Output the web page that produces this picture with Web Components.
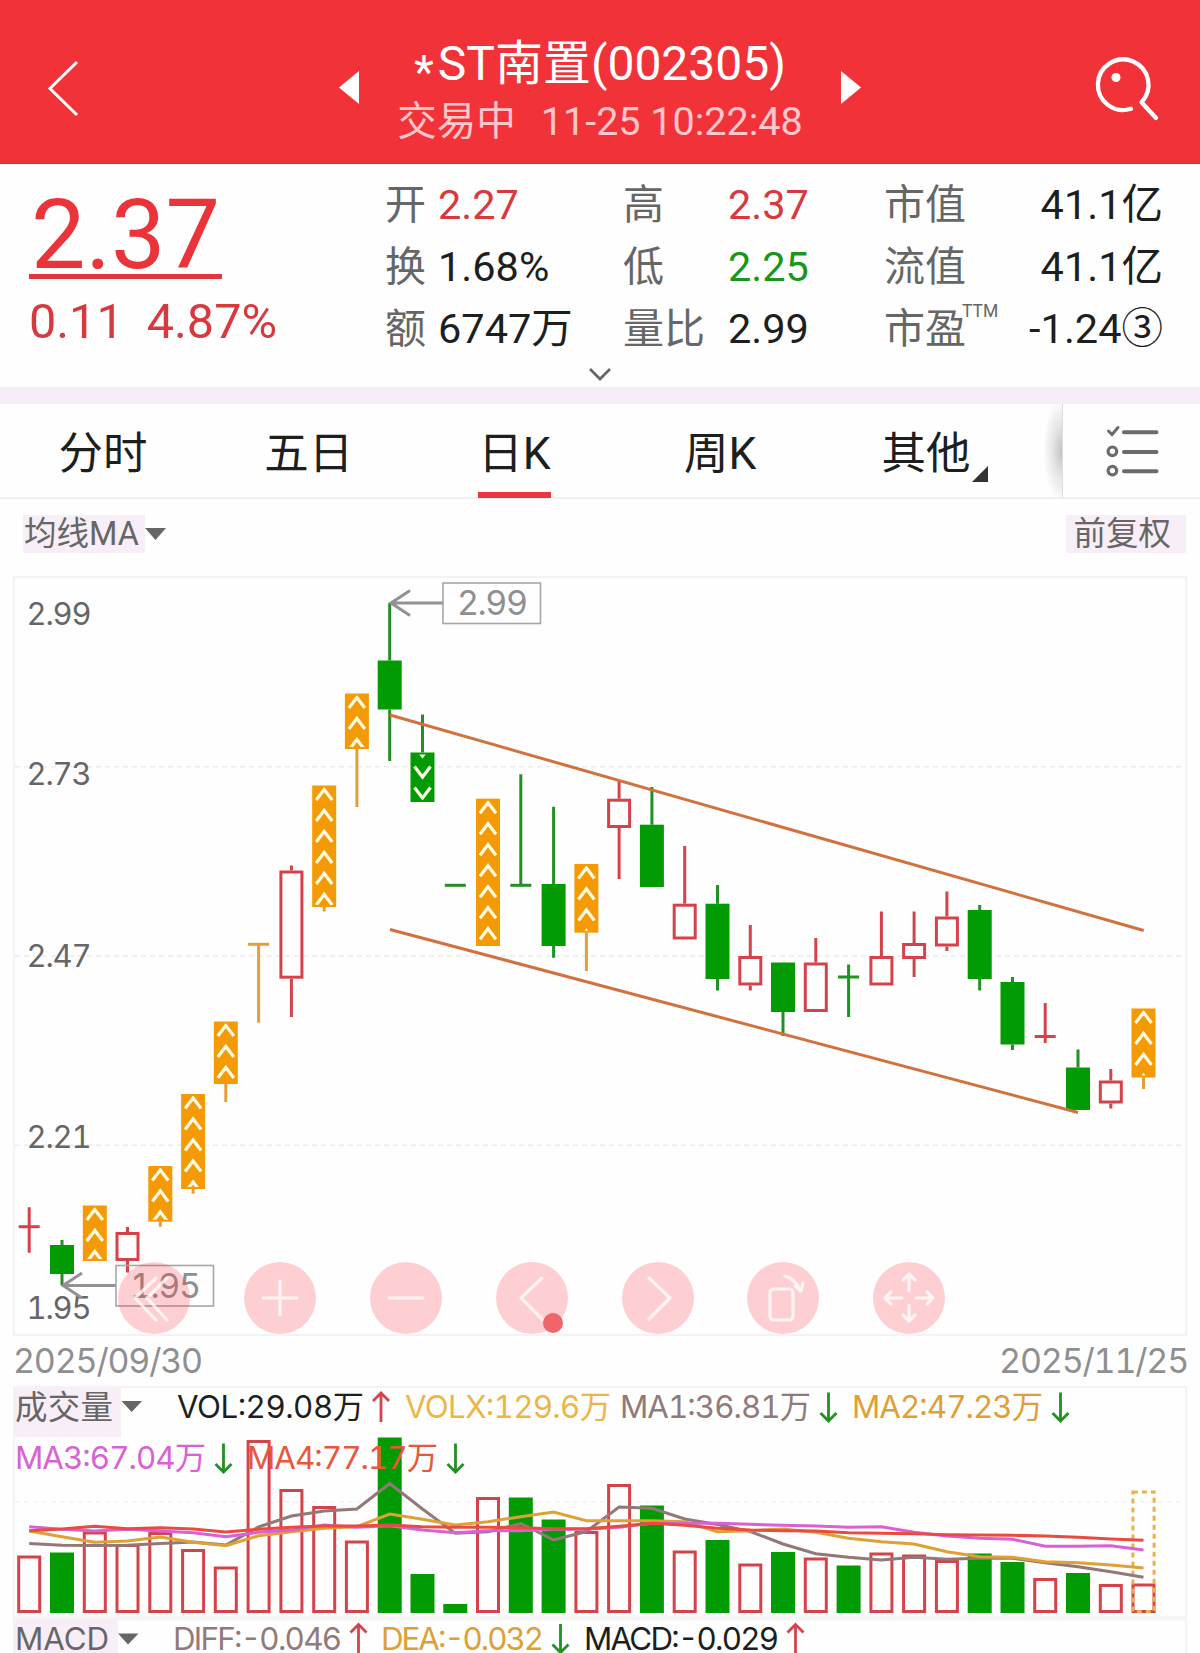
<!DOCTYPE html>
<html lang="zh-CN">
<head>
<meta charset="utf-8">
<meta name="viewport" content="width=device-width">
<title>*ST南置(002305)</title>
<style>
  body {
    margin: 0;
    width: 1200px;
    height: 1653px;
    overflow: hidden;
    background: #fefefe;
    font-family: Roboto, "Noto Sans CJK SC", sans-serif;
    color: #1c1f1e;
    --red: #d8393f;
    --green: #1a961a;
    --label: #666;
    --tint: #f7eef7;
    --chart-font: Inter, "Noto Sans CJK SC", sans-serif;
  }
</style>
</head>
<body>
<stock-page>
  <stock-header slot="header" mark="*" name="ST南置(002305)" status="交易中" time="11-25 10:22:48"></stock-header>
  <stock-quote slot="quote" price="2.37" change="0.11" percent="4.87%">
    <quote-cell label="开" tone="up">2.27</quote-cell>
    <quote-cell label="高" tone="up">2.37</quote-cell>
    <quote-cell label="市值">41.1亿</quote-cell>
    <quote-cell label="换">1.68%</quote-cell>
    <quote-cell label="低" tone="down">2.25</quote-cell>
    <quote-cell label="流值">41.1亿</quote-cell>
    <quote-cell label="额">6747万</quote-cell>
    <quote-cell label="量比">2.99</quote-cell>
    <quote-cell label="市盈" sup="TTM">-1.24③</quote-cell>
  </stock-quote>
  <period-tabs slot="tabs">
    <period-tab>分时</period-tab>
    <period-tab>五日</period-tab>
    <period-tab active>日K</period-tab>
    <period-tab>周K</period-tab>
    <period-tab more>其他</period-tab>
  </period-tabs>
  <chart-options slot="options">
    <span slot="left">均线MA</span>
    <span slot="right">前复权</span>
  </chart-options>
  <kline-chart slot="kline" from="2025/09/30" to="2025/11/25">
    <chart-tools></chart-tools>
  </kline-chart>
  <volume-chart slot="volume"></volume-chart>
</stock-page>

<script>
const RED = '#d5434a'
const GREEN = '#039b03'
const WICK_GREEN = '#229022'
const ORANGE = '#f39a05'

const centerOf = i => +(29.2 + 32.775 * i).toFixed(1)

class StockPage extends HTMLElement {
  constructor() {
    super()
    this.attachShadow({ mode: 'open' })
  }
  connectedCallback() {
    this.shadowRoot.innerHTML = `
      <style>
        :host { display: flex; flex-direction: column; width: 1200px; }
        .band { height: 17px; background: #f7edf7; }
      </style>
      <slot name="header"></slot>
      <slot name="quote"></slot>
      <div class="band"></div>
      <slot name="tabs"></slot>
      <slot name="options"></slot>
      <slot name="kline"></slot>
      <slot name="volume"></slot>
    `
  }
}

class StockHeader extends HTMLElement {
  constructor() {
    super()
    this.attachShadow({ mode: 'open' })
  }
  connectedCallback() {
    this.shadowRoot.innerHTML = `
      <style>
        :host {
          display: flex;
          justify-content: space-between;
          box-sizing: border-box;
          height: 164px;
          background: #f13339;
          border-bottom: 1px solid #c9353a;
          color: #fff;
        }
        svg { display: block; fill: none; stroke: #fff; }
        .title { display: flex; gap: 34px; }
        .text { width: 414px; text-align: center; white-space: nowrap; }
        .name {
          display: flex;
          justify-content: center;
          gap: 4px;
          height: 54px;
          font-size: 48px;
          line-height: 54px;
          margin-top: 37px;
        }
        .mark { padding-top: 8px; font-size: 46px; }
        .sub {
          display: flex;
          justify-content: center;
          gap: 25px;
          font-size: 39.500px;
          line-height: 46px;
          margin-top: 8px;
          color: #ffc6cb;
        }
      </style>
      <svg width="140" height="163"><path d="M77 62L50 88.500L77 115" stroke-width="3"/></svg>
      <div class="title">
        <svg width="20" height="163"><path d="M20 71V104L0 87.500Z" fill="#fff" stroke="none"/></svg>
        <div class="text">
          <div class="name"><span class="mark">${this.getAttribute('mark')}</span><span>${this.getAttribute('name')}</span></div>
          <div class="sub"><span>${this.getAttribute('status')}</span><span>${this.getAttribute('time')}</span></div>
        </div>
        <svg width="20" height="163"><path d="M0 71V104L20 87.500Z" fill="#fff" stroke="none"/></svg>
      </div>
      <svg width="140" height="163" viewBox="1060 0 140 163" stroke-width="4.300" stroke-linecap="round" stroke-linejoin="round">
        <path d="M1131 108.800A25.300 25.300 0 1 1 1141.500 102.200L1156 118"/>
        <circle cx="1116" cy="77.500" r="4.500" fill="#fff" stroke="none"/>
      </svg>
    `
  }
}

class StockQuote extends HTMLElement {
  constructor() {
    super()
    this.attachShadow({ mode: 'open' })
  }
  connectedCallback() {
    this.shadowRoot.innerHTML = `
      <style>
        :host {
          display: grid;
          grid-template-columns: 357px 1fr;
          grid-template-rows: 194px 29px;
          height: 223px;
          color: #ea343a;
        }
        .main { padding-left: 29px; }
        .price {
          width: 193px;
          box-sizing: border-box;
          height: 115px;
          border-bottom: 5px solid #e0383e;
          font-size: 97px;
          line-height: 142px;
          text-align: center;
        }
        .change {
          display: flex;
          gap: 23px;
          font-size: 48.600px;
          line-height: 56px;
          margin-top: 15px;
          color: var(--red);
        }
        .cells {
          display: grid;
          grid-template-columns: 238px 261px 279px;
          grid-auto-rows: 61.800px;
          padding: 11px 0 0 28px;
        }
        .more { grid-column: 1 / 3; justify-self: center; }
      </style>
      <div class="main">
        <div class="price">${this.getAttribute('price')}</div>
        <div class="change"><span>${this.getAttribute('change')}</span><span>${this.getAttribute('percent')}</span></div>
      </div>
      <div class="cells"><slot></slot></div>
      <svg class="more" width="24" height="29" fill="none" stroke="#666" stroke-width="2.800"><path d="M2 11L12 21L22 11"/></svg>
    `
    // columns differ in how the value sits beside its label
    Array.from(this.children).forEach((cell, i) => {
      cell.setAttribute('column', i % 3)
    })
  }
}

class QuoteCell extends HTMLElement {
  constructor() {
    super()
    this.attachShadow({ mode: 'open' })
  }
  connectedCallback() {
    this.shadowRoot.innerHTML = `
      <style>
        :host {
          display: flex;
          font-size: 41.500px;
          line-height: 61px;
          color: #1c1f1e;
          white-space: nowrap;
        }
        :host([tone="up"]) { color: var(--red); }
        :host([tone="down"]) { color: var(--green); }
        .label { font-size: 41px; color: var(--label); margin-right: 12px; position: relative; }
        .value { line-height: 59px; }
        :host([column="1"]) .label { width: 93px; }
        :host([column="2"]) { justify-content: space-between; }
        sup {
          position: absolute;
          left: 78px;
          top: 2px;
          font-size: 17.500px;
          line-height: 20px;
        }
      </style>
      <span class="label">${this.getAttribute('label')}${this.hasAttribute('sup') ? `<sup>${this.getAttribute('sup')}</sup>` : ''}</span>
      <span class="value"><slot></slot></span>
    `
  }
}

class PeriodTabs extends HTMLElement {
  constructor() {
    super()
    this.attachShadow({ mode: 'open' })
  }
  connectedCallback() {
    this.shadowRoot.innerHTML = `
      <style>
        :host {
          display: flex;
          box-sizing: border-box;
          height: 95px;
          border-bottom: 2px solid #f1f0f1;
        }
        .tabs { display: grid; grid-template-columns: repeat(5, 205.800px); width: 1029px; }
        .shade {
          width: 34px;
          box-sizing: border-box;
          border-right: 1px solid #dcdcdc;
          background: radial-gradient(ellipse 19px 52px at 100% 50%, #c4c2c4, #e6e4e6 50%, #fefefe);
        }
        svg { display: block; }
      </style>
      <div class="tabs"><slot></slot></div>
      <div class="shade"></div>
      <svg width="136" height="93" viewBox="1064 404 136 93" fill="none" stroke="#6b6b6b" stroke-linecap="round">
        <path d="M1125 432.300H1157.500M1125 452H1157.500M1125 471.300H1157.500" stroke-width="4"/>
        <path d="M1109.500 431L1113 434.500L1119 427.500" stroke-width="3"/>
        <circle cx="1113.400" cy="451.300" r="4.300" stroke-width="3.200"/>
        <circle cx="1113.400" cy="470.600" r="4.300" stroke-width="3.200"/>
      </svg>
    `
  }
}

class PeriodTab extends HTMLElement {
  constructor() {
    super()
    this.attachShadow({ mode: 'open' })
  }
  connectedCallback() {
    this.shadowRoot.innerHTML = `
      <style>
        :host {
          display: flex;
          justify-content: center;
          font-size: 44.500px;
          line-height: 101px;
        }
        span { position: relative; height: 94px; }
        :host([active]) span { box-shadow: inset 0 -6px #e9383d; }
        :host([more]) span::after {
          content: "";
          position: absolute;
          right: -17px;
          top: 62px;
          border: 8px solid;
          border-color: transparent #333 #333 transparent;
        }
      </style>
      <span><slot></slot></span>
    `
  }
}

class ChartOptions extends HTMLElement {
  constructor() {
    super()
    this.attachShadow({ mode: 'open' })
  }
  connectedCallback() {
    this.shadowRoot.innerHTML = `
      <style>
        :host {
          display: flex;
          justify-content: space-between;
          box-sizing: border-box;
          height: 71px;
          padding: 16px 14px 0 23px;
          font-size: 32.500px;
          line-height: 39px;
          color: var(--label);
        }
        div { display: flex; }
        .badge { height: 38px; padding: 0 6px 0 1px; background: var(--tint); }
        .right { padding: 0 15px 0 7px; }
      </style>
      <div>
        <div class="badge"><slot name="left"></slot></div>
        <svg width="21" height="38" fill="#666"><path d="M0 13H21L10.500 25Z"/></svg>
      </div>
      <div class="badge right"><slot name="right"></slot></div>
    `
  }
}

// kind, high, body top, body bottom, low (a bar without a body has top equal to bottom)
const CANDLES = [
  ['red', 1207.3, 1226.7, 1226.7, 1252.7],
  ['green', 1240, 1245, 1274, 1285],
  ['limit', 1205.5, 1205.5, 1261, 1261],
  ['red', 1227, 1232, 1261, 1272.5],
  ['limit', 1166, 1166, 1221.7, 1226.7],
  ['limit', 1094, 1094, 1189, 1193.7],
  ['limit', 1021.5, 1021.5, 1084, 1102],
  ['limit', 944.3, 944.3, 944.3, 1022.7],
  ['red', 865.5, 870.5, 978.7, 1017],
  ['limit', 785.5, 785.5, 907, 911.5],
  ['limit', 693.5, 693.5, 749, 807],
  ['green', 603, 660.5, 709.5, 761],
  ['drop', 714.5, 752.5, 802, 802],
  ['green', 885.3, 885.3, 885.3, 885.3],
  ['limit', 798.7, 798.7, 946, 946],
  ['green', 774.3, 885.3, 885.3, 885.3],
  ['green', 806.7, 884, 946, 957.7],
  ['limit', 864, 864, 932.7, 971],
  ['red', 780, 798.7, 828, 879],
  ['green', 787, 824.7, 887, 887],
  ['red', 846, 903.7, 939.5, 939.5],
  ['green', 885, 903.7, 979, 990.5],
  ['red', 925, 956, 985.5, 990.5],
  ['green', 962.5, 962.5, 1012, 1036],
  ['red', 938, 962.5, 1012, 1012],
  ['green', 964.5, 977, 977, 1017],
  ['red', 911.5, 956, 985.5, 985.5],
  ['red', 911.5, 943, 959, 977],
  ['red', 891.5, 916.5, 946.5, 951],
  ['green', 905, 910, 979, 990.5],
  ['green', 977, 982, 1044.5, 1050],
  ['red', 1003, 1036.5, 1036.5, 1043],
  ['green', 1049.5, 1067.5, 1110, 1110],
  ['red', 1069, 1080.5, 1103.5, 1108.5],
  ['limit', 1008.5, 1008.5, 1077.5, 1089],
]

class KlineChart extends HTMLElement {
  constructor() {
    super()
    this.attachShadow({ mode: 'open' })
  }
  connectedCallback() {
    this.shadowRoot.innerHTML = `
      <style>
        :host {
          display: block;
          position: relative;
          height: 816px;
          font-family: var(--chart-font);
          font-variant-numeric: tabular-nums;
        }
        svg { display: block; }
        .axis { font-size: 31px; fill: #666; }
        .tag { font-size: 34px; fill: #8f8f8f; }
        .dates {
          display: flex;
          justify-content: space-between;
          padding: 0 12px 0 13px;
          font-size: 34px;
          line-height: 48px;
          letter-spacing: -1.200px;
          color: #8f8f8f;
        }
        ::slotted(chart-tools) { position: absolute; left: 118px; top: 692px; }
      </style>
      <svg width="1200" height="767" viewBox="0 570 1200 767">
        <rect x="14" y="577" width="1172" height="758" fill="none" stroke="#f4f2f4" stroke-width="2"/>
        <path d="M15 766.700H1185M15 956H1185M15 1145.300H1185" stroke="#ececec" stroke-width="1.500" stroke-dasharray="5 4"/>
        <g class="axis">
          ${this.axis([['2.99', 625], ['2.73', 785], ['2.47', 967], ['2.21', 1148], ['1.95', 1319]])}
        </g>
        ${CANDLES.map((c, i) => this.candle(c, i)).join('')}
        <path d="M390 715L1143.700 930.500M390 929.500L1078 1112.500" stroke="#d3703f" stroke-width="3" fill="none"/>
        ${this.tag('2.99', 391, 603, 443, 458)}
        ${this.tag('1.95', 63, 1285.5, 116, 131)}
      </svg>
      <div class="dates"><span>${this.getAttribute('from')}</span><span>${this.getAttribute('to')}</span></div>
      <slot></slot>
    `
  }
  axis(labels) {
    return labels.map(([text, y]) => `<text x="26.500" y="${y}" textLength="65">${text}</text>`).join('')
  }
  tag(text, x, y, boxX, textX) {
    return `
      <g fill="none" stroke="#929292" stroke-width="3">
        <path d="M${x} ${y}H${boxX}M${x + 19} ${y - 12.5}L${x} ${y}L${x + 19} ${y + 12.5}"/>
        <rect x="${boxX}" y="${y - 20}" width="97.500" height="40.500" stroke="#a6a6a6" stroke-width="1.600"/>
      </g>
      <text class="tag" x="${textX - 1}" y="${y + 12.3}" textLength="71">${text}</text>
    `
  }
  candle([kind, high, top, bottom, low], i) {
    const x = centerOf(i)
    const wick = kind == 'red' ? RED : kind == 'limit' ? '#e3a03a' : WICK_GREEN
    const stroke = `stroke="${wick}" stroke-width="3"`
    const wicks = `<path d="M${x} ${high}V${top}M${x} ${bottom}V${low}" ${stroke}/>`
    if (top == bottom) {
      return `${wicks}<path d="M${x - 10.5} ${top}H${x + 10.5}" ${stroke}/>`
    }
    if (kind == 'red') {
      return `${wicks}<rect x="${x - 10.5}" y="${top + 1.5}" width="21" height="${bottom - top - 3}" fill="none" ${stroke}/>`
    }
    const fill = kind == 'limit' ? ORANGE : GREEN
    const body = `<rect x="${x - 12}" y="${top}" width="24" height="${bottom - top}" fill="${fill}"/>`
    return wicks + body + (kind == 'green' ? '' : this.chevrons(kind, x, top, bottom, i))
  }
  chevrons(kind, x, top, bottom, i) {
    let d = ''
    if (kind == 'limit') {
      for (let y = top + 4; y < bottom - 1; y += 21) d += `M${x - 8} ${y + 10.5}L${x} ${y}L${x + 8} ${y + 10.5}`
    } else {
      for (let y = bottom - 4; y > top + 1; y -= 21) d += `M${x - 8} ${y - 10.5}L${x} ${y}L${x + 8} ${y - 10.5}`
    }
    return `
      <clipPath id="c${i}"><rect x="${x - 12}" y="${top + 2}" width="24" height="${bottom - top - 4}"/></clipPath>
      <path d="${d}" clip-path="url(#c${i})" fill="none" stroke="#fffbe2" stroke-width="3.200"/>
    `
  }
}

const TOOL_ICONS = [
  'M38 16L17 36L38 58M49 16L29 36L49 58',
  'M19 36H53M36 19V53',
  'M19 36H53',
  'M46 16L25 36L46 57',
  'M27 16L48 36L27 57',
  'M27 27H42Q46 27 46 31V54Q46 58 42 58H27Q23 58 23 54V31Q23 27 27 27ZM38 14Q49 17 53 29M48 24L54 29L56 21',
  'M36 12V29M30 18L36 12L42 18M36 43V59M30 53L36 59L42 53M12 36H29M18 30L12 36L18 42M43 36H60M54 30L60 36L54 42',
]

class ChartTools extends HTMLElement {
  constructor() {
    super()
    this.attachShadow({ mode: 'open' })
  }
  connectedCallback() {
    this.shadowRoot.innerHTML = `
      <style>
        :host { display: flex; gap: 53.900px; }
        .tool {
          position: relative;
          width: 72px;
          height: 72px;
          border-radius: 50%;
          background: rgba(250, 50, 70, .230);
        }
        svg { display: block; }
        .dot {
          position: absolute;
          right: 5px;
          bottom: 1px;
          width: 20px;
          height: 20px;
          border-radius: 50%;
          background: #f0646b;
        }
      </style>
      ${TOOL_ICONS.map((d, i) => `
        <div class="tool">
          <svg width="72" height="72" fill="none" stroke="#fff" stroke-opacity=".75" stroke-width="3.200" stroke-linecap="round" stroke-linejoin="round"><path d="${d}"/></svg>
          ${i == 3 ? '<div class="dot"></div>' : ''}
        </div>
      `).join('')}
    `
  }
}

// sign is the direction of the day, then the top of the bar
const VOLUMES = [
  [1, 1555.5], [-1, 1552.5], [1, 1531.5], [1, 1544], [1, 1532], [1, 1549], [1, 1566.5],
  [1, 1440], [1, 1489], [1, 1506], [1, 1540.5], [-1, 1437.5], [-1, 1574], [-1, 1604],
  [1, 1497], [-1, 1497.5], [-1, 1519.5], [1, 1531], [1, 1484], [-1, 1505.5], [1, 1550.5],
  [-1, 1540], [1, 1563.5], [-1, 1552], [1, 1557.5], [-1, 1565.5], [1, 1552.5], [1, 1554.5],
  [1, 1560], [-1, 1553.5], [-1, 1562], [1, 1578], [-1, 1573], [1, 1584], [1, 1583.5],
]

const AVERAGES = [
  ['#927876', [1543.5, 1545.3, 1545.5, 1545.3, 1543.5, 1542, 1545, 1527, 1516, 1511, 1509, 1483.5, 1509, 1533.3, 1531.7, 1523.5, 1540, 1531.5, 1507, 1508.3, 1519, 1524.5, 1531.5, 1544, 1553.7, 1557.3, 1560, 1557.3, 1559.3, 1558.3, 1558.3, 1562.7, 1566.7, 1571.7, 1577.3]],
  ['#dfa036', [1531, 1536.7, 1542.3, 1541, 1537, 1542.3, 1545.7, 1535.7, 1531.7, 1528.3, 1526.7, 1514, 1519.3, 1525, 1521.7, 1516.7, 1512, 1520.7, 1520.7, 1520.7, 1521.7, 1531.7, 1530.7, 1529, 1532.3, 1538.3, 1541.7, 1544, 1551.7, 1556.7, 1557.3, 1561.7, 1562.7, 1565, 1568]],
  ['#d960d6', [1526.7, 1529.3, 1531, 1529.3, 1531, 1532.7, 1536.7, 1532.3, 1530, 1525, 1527.3, 1525.7, 1530, 1532.7, 1530.7, 1530.7, 1529.3, 1529.3, 1527.3, 1523.3, 1523.3, 1523.3, 1524.3, 1525.3, 1526, 1527.3, 1526.7, 1532.3, 1536, 1538.3, 1539.3, 1546.3, 1546.3, 1545.7, 1550]],
  ['#ea4b40', [1530.7, 1529, 1526.3, 1528.7, 1527.7, 1529, 1532, 1529.3, 1527.3, 1526, 1526, 1525, 1526.7, 1527.3, 1527.3, 1527.7, 1528.7, 1528.7, 1526.3, 1523.3, 1525.3, 1528.3, 1530, 1530.7, 1531, 1532.7, 1533.3, 1533.7, 1534.7, 1535, 1535.3, 1536, 1537.3, 1539, 1540.3]],
]

// text, x, baseline, width, colour, trend arrow (x, direction)
const LEGEND = [
  ['VOL:29.08万', 177, 1418, 187, '#1c1f1e', 381, 1],
  ['VOLX:129.6万', 405, 1418, 206, '#eab64a'],
  ['MA1:36.81万', 620, 1418, 191, '#917a78', 828.5, -1],
  ['MA2:47.23万', 852, 1418, 191, '#dea036', 1060.5, -1],
  ['MA3:67.04万', 15, 1469, 191, '#d862d5', 223.5, -1],
  ['MA4:77.17万', 247, 1469, 191, '#e7573b', 455.5, -1],
  ['DIFF:-0.046', 173, 1649.5, 169, '#917a78', 358.5, 1],
  ['DEA:-0.032', 381, 1649.5, 163, '#dea036', 560.5, -1],
  ['MACD:-0.029', 584, 1649.5, 195, '#1c1f1e', 795.5, 1],
]

class VolumeChart extends HTMLElement {
  constructor() {
    super()
    this.attachShadow({ mode: 'open' })
  }
  connectedCallback() {
    this.shadowRoot.innerHTML = `
      <style>
        :host { display: block; font-family: var(--chart-font); font-variant-numeric: tabular-nums; }
        svg { display: block; font-size: 31.300px; }
      </style>
      <svg width="1200" height="267" viewBox="0 1386 1200 267">
        <g fill="none" stroke="#f4f2f4" stroke-width="2">
          <rect x="14" y="1387" width="1172" height="230.500"/>
          <rect x="14" y="1619.500" width="1172" height="60"/>
          <path d="M15 1502H1185" stroke-width="1.500" stroke-dasharray="5 4"/>
        </g>
        <path d="M14 1388H121V1437H14ZM14 1620H118V1653H14Z" fill="#f7eef7"/>
        <g fill="#666">
          <text x="15" y="1419" textLength="98" font-size="32.500">成交量</text>
          <text x="15" y="1649.500" textLength="94">MACD</text>
          <path d="M121.500 1401H142L131.700 1412ZM118 1633.500H138.500L128 1644.500Z"/>
        </g>
        ${VOLUMES.map(([sign, top], i) => this.bar(sign, top, i)).join('')}
        <rect x="${centerOf(34) - 10.6}" y="1492" width="21.200" height="119.500" fill="none" stroke="#e7b14c" stroke-width="3" stroke-dasharray="5 4"/>
        ${AVERAGES.map(([color, ys]) => `
          <polyline points="${ys.map((y, i) => `${centerOf(i)},${y}`).join(' ')}" fill="none" stroke="${color}" stroke-width="3"/>
        `).join('')}
        ${LEGEND.map(item => this.legend(item)).join('')}
      </svg>
    `
  }
  bar(sign, top, i) {
    const x = centerOf(i)
    return sign > 0
      ? `<rect x="${x - 10.5}" y="${top + 1.5}" width="21" height="${1610 - top}" fill="none" stroke="${RED}" stroke-width="3"/>`
      : `<rect x="${x - 12}" y="${top}" width="24" height="${1613 - top}" fill="${GREEN}"/>`
  }
  legend([text, x, y, width, color, arrowX, dir]) {
    const tip = dir > 0 ? y - 25 : y + 3
    const arrow = `<path d="M${arrowX} ${y - 25.5}V${y + 4}M${arrowX - 8} ${tip + 8 * dir}L${arrowX} ${tip}L${arrowX + 8} ${tip + 8 * dir}" fill="none" stroke="${dir > 0 ? RED : WICK_GREEN}" stroke-width="2.800"/>`
    return `<text x="${x}" y="${y}" textLength="${width}" fill="${color}">${text}</text>${dir ? arrow : ''}`
  }
}

customElements.define('stock-page', StockPage)
customElements.define('stock-header', StockHeader)
customElements.define('stock-quote', StockQuote)
customElements.define('quote-cell', QuoteCell)
customElements.define('period-tabs', PeriodTabs)
customElements.define('period-tab', PeriodTab)
customElements.define('chart-options', ChartOptions)
customElements.define('kline-chart', KlineChart)
customElements.define('chart-tools', ChartTools)
customElements.define('volume-chart', VolumeChart)
</script>
</body>
</html>
